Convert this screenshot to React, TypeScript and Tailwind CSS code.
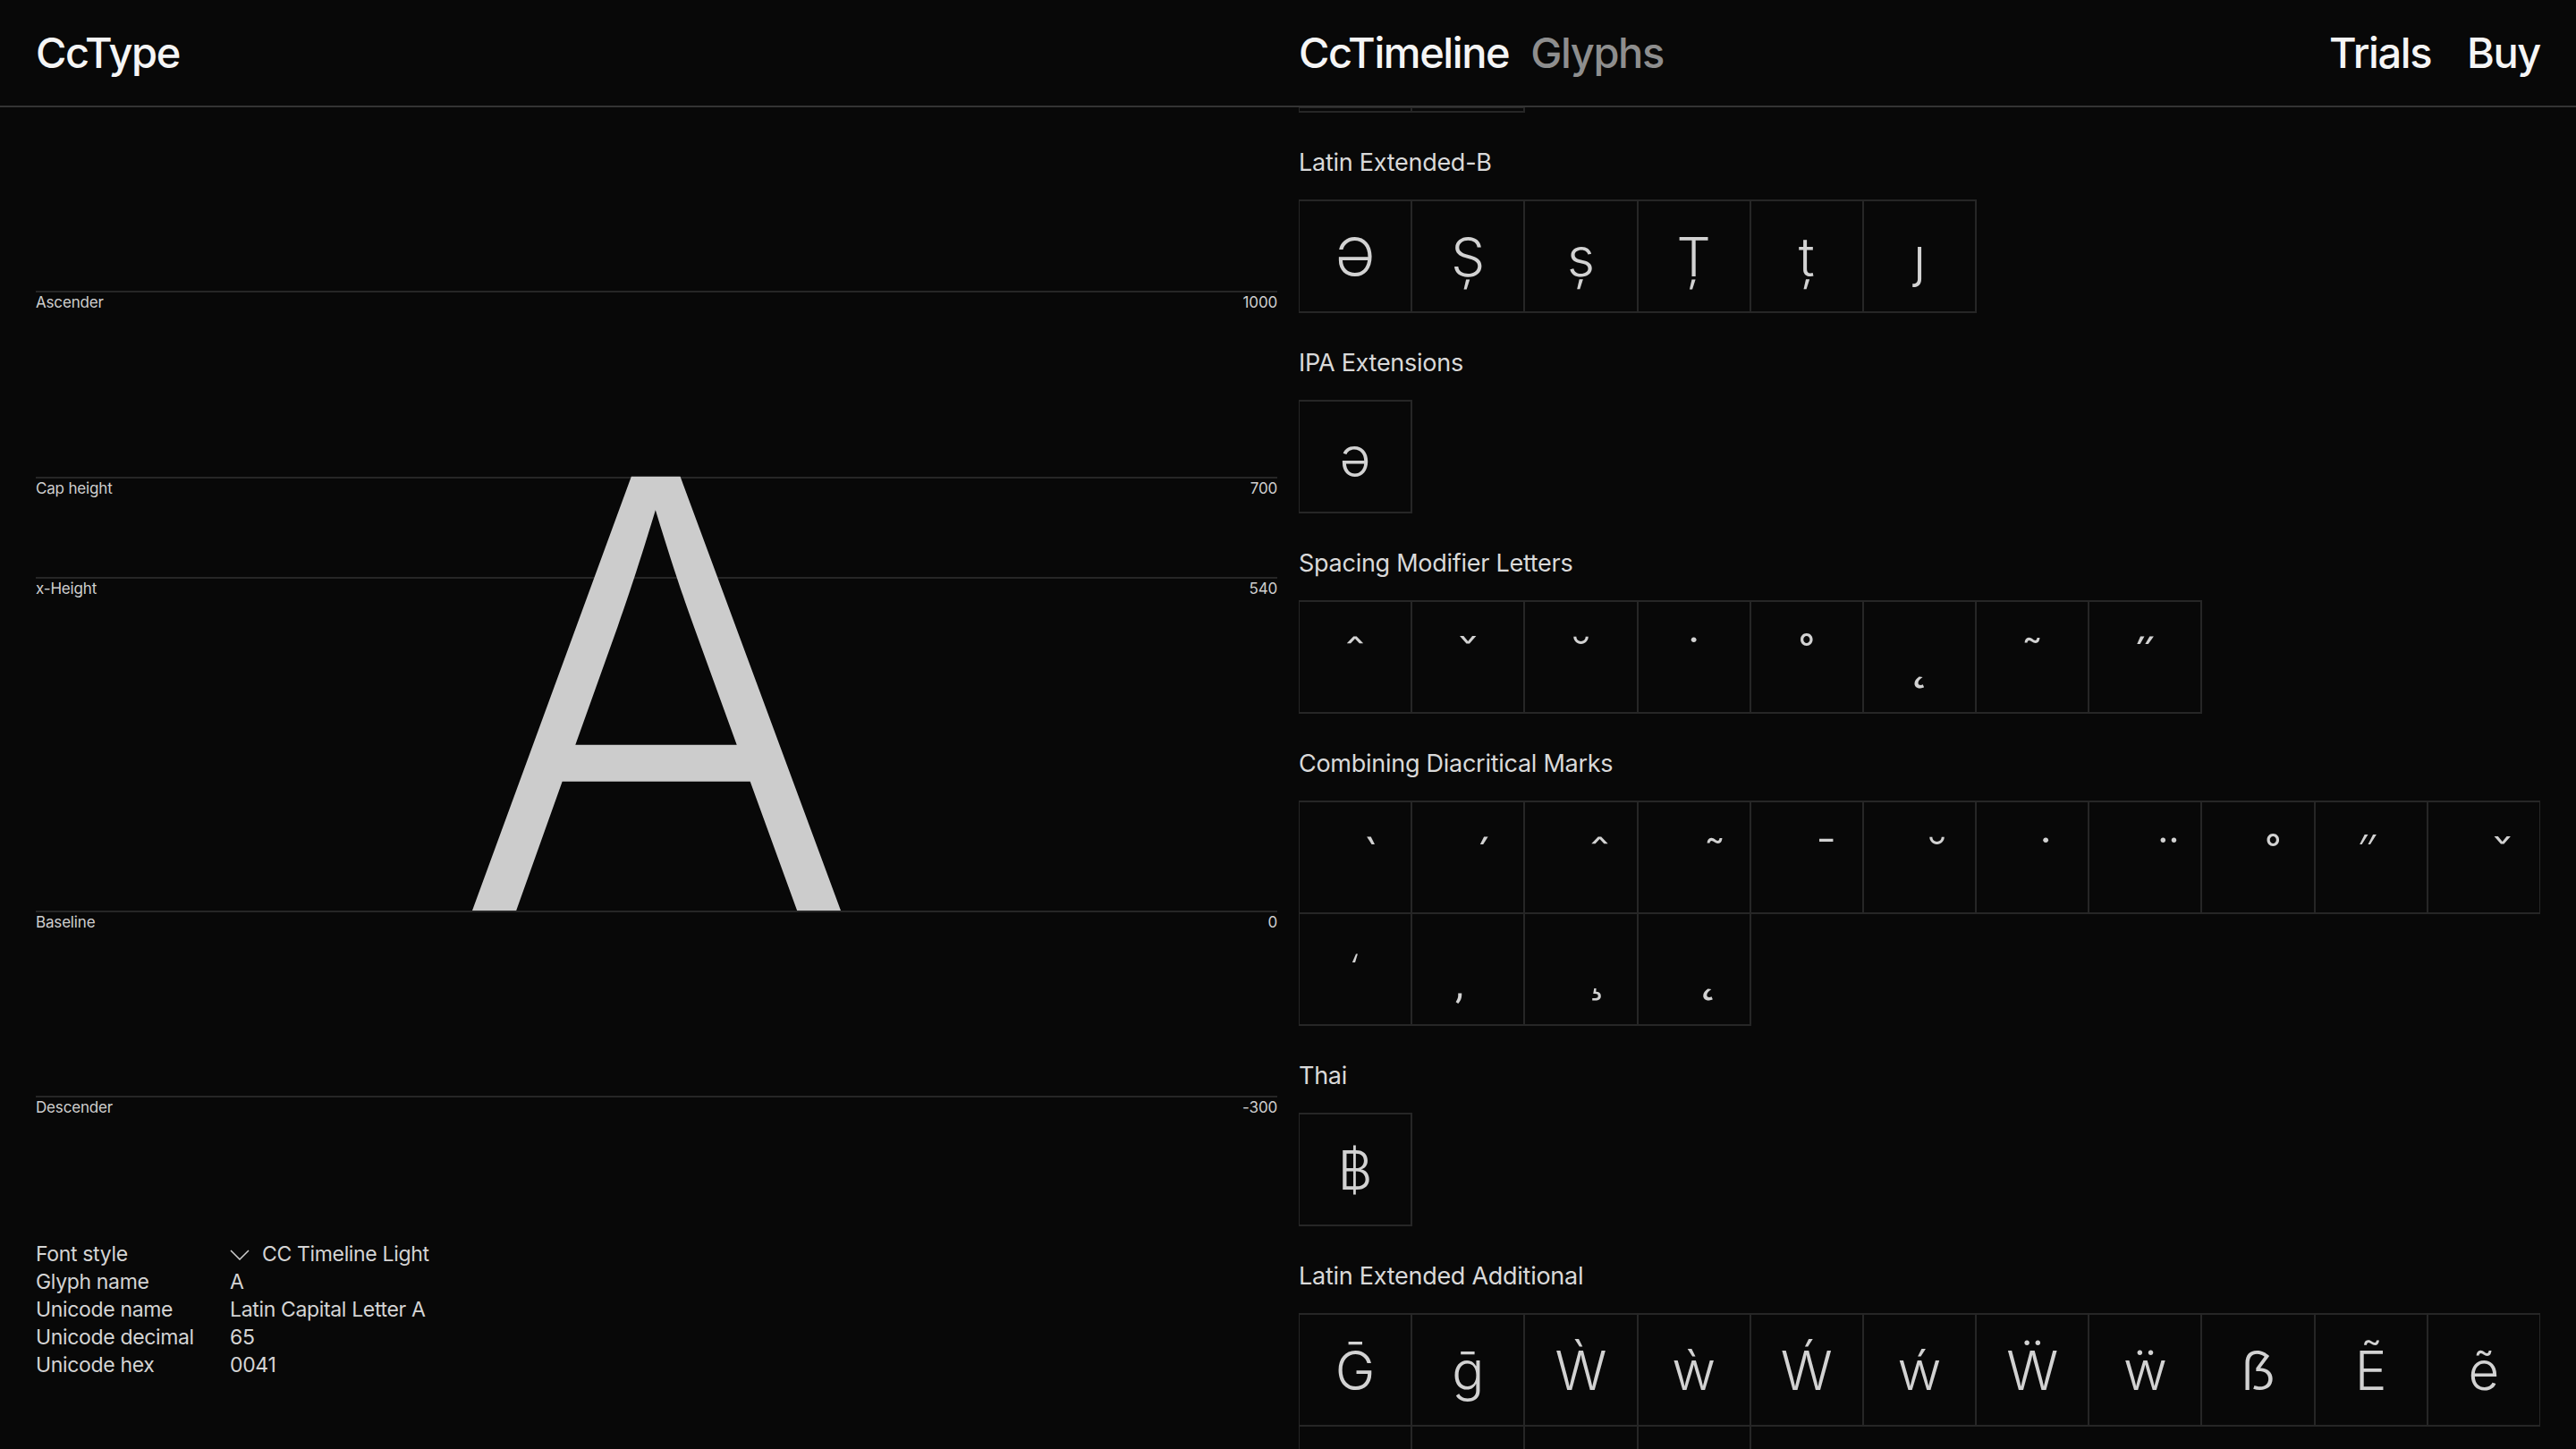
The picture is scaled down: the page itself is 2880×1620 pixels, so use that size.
import React from "react";

const cellCls =
  "h-[125px] flex items-center justify-center outline-2 outline-[#262626] -outline-offset-1 text-[60px] leading-none font-light text-[#d2d2d2]";

const sections: { title: string; glyphs: string[] }[] = [
  { title: "Latin Extended-B", glyphs: ["\u018F", "\u0218", "\u0219", "\u021A", "\u021B", "\u0237"] },
  { title: "IPA Extensions", glyphs: ["\u0259"] },
  {
    title: "Spacing Modifier Letters",
    glyphs: ["\u02C6", "\u02C7", "\u02D8", "\u02D9", "\u02DA", "\u02DB", "\u02DC", "\u02DD"],
  },
  {
    title: "Combining Diacritical Marks",
    glyphs: [
      "\u00A0\u0300",
      "\u00A0\u0301",
      "\u00A0\u0302",
      "\u00A0\u0303",
      "\u00A0\u0304",
      "\u00A0\u0306",
      "\u00A0\u0307",
      "\u00A0\u0308",
      "\u00A0\u030A",
      "\u00A0\u030B",
      "\u00A0\u030C",
      "\u00A0\u0312",
      "\u00A0\u0326",
      "\u00A0\u0327",
      "\u00A0\u0328",
    ],
  },
  { title: "Thai", glyphs: ["\u0E3F"] },
  {
    title: "Latin Extended Additional",
    glyphs: [
      "\u1E20",
      "\u1E21",
      "\u1E80",
      "\u1E81",
      "\u1E82",
      "\u1E83",
      "\u1E84",
      "\u1E85",
      "\u1E9E",
      "\u1EBC",
      "\u1EBD",
      "\u1EF2",
      "\u1EF3",
      "\u1EF8",
      "\u1EF9",
    ],
  },
];

const metrics = [
  { label: "Ascender", value: "1000", h: "h-[208px]" },
  { label: "Cap height", value: "700", h: "h-[112px]" },
  { label: "x-Height", value: "540", h: "h-[373px]" },
  { label: "Baseline", value: "0", h: "h-[207px]" },
  { label: "Descender", value: "-300", h: "h-[162px]" },
];

function Section({ title, glyphs }: { title: string; glyphs: string[] }) {
  return (
    <section className="pt-[41px]">
      <h2 className="text-[27px] leading-[32px] tracking-[-0.01em] text-[#d9d9d9]">{title}</h2>
      <div className="mt-[26px] grid grid-cols-[repeat(11,minmax(0,1fr))]">
        {glyphs.map((g, i) => (
          <div key={i} className={cellCls}>
            {g}
          </div>
        ))}
      </div>
    </section>
  );
}

export default function App() {
  return (
    <div className="h-[1620px] w-[2880px] overflow-hidden bg-[#080808] text-[#f5f5f5] font-[family-name:Inter,'DejaVu_Sans','Noto_Sans',sans-serif]">
      <header className="h-[120px] border-b-2 border-[#333333] px-10 grid grid-cols-2 gap-6 items-center">
        <div className="text-[47px] font-medium tracking-[-0.03em] text-[#f5f5f5]">CcType</div>
        <div className="flex items-center justify-between text-[47px] font-medium tracking-[-0.03em]">
          <div className="flex gap-6">
            <span className="text-[#f5f5f5]">CcTimeline</span>
            <span className="text-[#8e8e8e]">Glyphs</span>
          </div>
          <div className="flex gap-10 text-[#f5f5f5]">
            <span>Trials</span>
            <span>Buy</span>
          </div>
        </div>
      </header>

      <main className="h-[1500px] grid grid-cols-2 gap-6 px-10 overflow-hidden">
        {/* Left: glyph metrics preview */}
        <div className="pt-[205px] flex flex-col">
          <div className="relative">
            {metrics.map((m) => (
              <div key={m.label} className={`${m.h} border-t-2 border-[#262626]`}>
                <div className="flex justify-between text-[17px] leading-[22px] tracking-[-0.01em] text-[#cfcfcf]">
                  <span>{m.label}</span>
                  <span>{m.value}</span>
                </div>
              </div>
            ))}
            <div className="pointer-events-none absolute inset-x-0 top-[117px] text-center text-[667px] leading-none font-light text-[#cccccc]">
              A
            </div>
          </div>
          <div className="grid grid-cols-[217px_1fr] text-[23px] leading-[31px] tracking-[-0.015em] text-[#d4d4d4]">
            <span>Font style</span>
            <span className="flex items-center gap-[14px]">
              <svg width="22" height="12" viewBox="0 0 22 12" fill="none" className="shrink-0">
                <polyline points="1,1 11,11 21,1" stroke="#cfcfcf" strokeWidth="1.5" />
              </svg>
              CC Timeline Light
            </span>
            <span>Glyph name</span>
            <span>A</span>
            <span>Unicode name</span>
            <span>Latin Capital Letter A</span>
            <span>Unicode decimal</span>
            <span>65</span>
            <span>Unicode hex</span>
            <span>0041</span>
          </div>
        </div>

        {/* Right: glyph set */}
        <div className="overflow-hidden">
          <div className="grid grid-cols-[repeat(11,minmax(0,1fr))]">
            <div className="h-[5px] outline-2 outline-[#262626] -outline-offset-1" />
            <div className="h-[5px] outline-2 outline-[#262626] -outline-offset-1" />
          </div>
          {sections.map((s) => (
            <Section key={s.title} title={s.title} glyphs={s.glyphs} />
          ))}
        </div>
      </main>
    </div>
  );
}
